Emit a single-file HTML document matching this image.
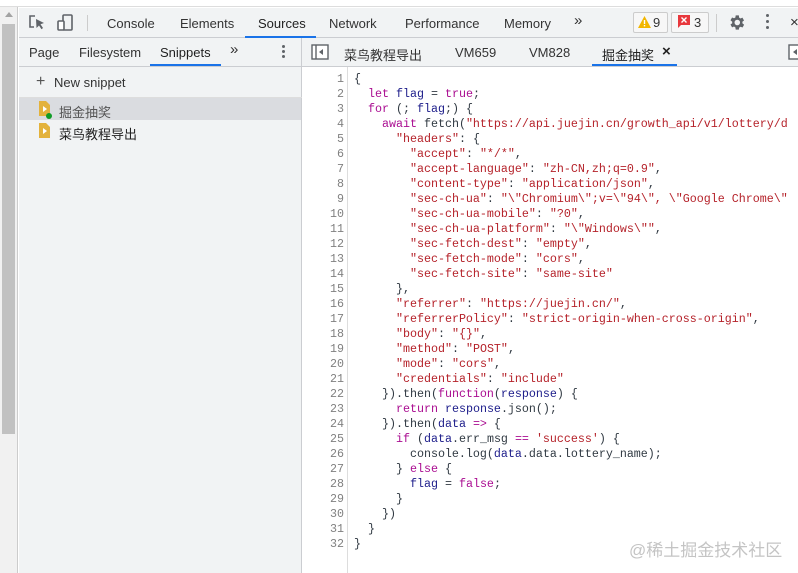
<!DOCTYPE html>
<html><head><meta charset="utf-8"><style>
*{margin:0;padding:0;box-sizing:border-box}
body{width:798px;height:573px;overflow:hidden;background:#fff;position:relative;font-family:"Liberation Sans","Noto Sans CJK SC",sans-serif;font-size:13px;color:#303942}
.a{position:absolute;white-space:nowrap}
.code{position:absolute;left:354px;top:72px;font-family:"Liberation Mono",monospace;font-size:11.67px;line-height:15px;color:#303942;white-space:pre}
.ln{position:absolute;left:302px;width:42px;top:72px;text-align:right;font-family:"Liberation Mono",monospace;font-size:11.67px;line-height:15px;color:#808080;white-space:pre}
.k{color:#aa0d91}.s{color:#b5222a}.v{color:#1c1c8a}
.tab{color:#333}
</style></head><body>
<!-- top white strip -->
<div class="a" style="left:0;top:0;width:798px;height:7px;background:#fff;border-bottom:1px solid #ddd"></div>
<!-- left scrollbar -->
<div class="a" style="left:0;top:7px;width:18px;height:566px;background:#f1f1f1;border-right:1px solid #ccc"></div>
<div class="a" style="left:5px;top:12px;width:0;height:0;border-left:4px solid transparent;border-right:4px solid transparent;border-bottom:5px solid #a3a3a3"></div>
<div class="a" style="left:2px;top:24px;width:13px;height:410px;background:#c1c1c1"></div>
<!-- toolbar -->
<div class="a" style="left:19px;top:8px;width:779px;height:30px;background:#f1f3f4;border-bottom:1px solid #cbcdd1"></div>
<svg class="a" style="left:28px;top:14px" width="18" height="18" viewBox="0 0 18 18"><path d="M7 2H2v11h4" fill="none" stroke="#5f6368" stroke-width="1.6"/><path d="M8 5l8 4-3.5 1.2L15 14l-1.5 1.2-2.5-3.7L8.5 14z" fill="#5f6368"/></svg>
<svg class="a" style="left:56px;top:13px" width="20" height="20" viewBox="0 0 20 20"><rect x="7" y="2" width="9" height="15" rx="1" fill="none" stroke="#5f6368" stroke-width="1.6"/><rect x="2" y="8" width="6" height="9" rx="1" fill="#fff" stroke="#5f6368" stroke-width="1.6"/></svg>
<div class="a" style="left:87px;top:15px;width:1px;height:16px;background:#ccc"></div>
<div class="a tab" style="left:107px;top:16px">Console</div>
<div class="a tab" style="left:180px;top:16px">Elements</div>
<div class="a" style="left:258px;top:16px;color:#1f1f1f">Sources</div>
<div class="a" style="left:245px;top:36px;width:71px;height:2px;background:#1a73e8"></div>
<div class="a tab" style="left:329px;top:16px">Network</div>
<div class="a tab" style="left:405px;top:16px">Performance</div>
<div class="a tab" style="left:504px;top:16px">Memory</div>
<div class="a tab" style="left:574px;top:12px;font-size:15px">»</div>
<div class="a" style="left:633px;top:12px;width:35px;height:21px;border:1px solid #ccc;border-radius:2px;background:#f7f7f7"></div>
<svg class="a" style="left:638px;top:16px" width="13" height="12" viewBox="0 0 13 12"><path d="M6.5 0L13 12H0z" fill="#f2b600"/><rect x="5.8" y="4" width="1.4" height="4" fill="#fff"/><rect x="5.8" y="9" width="1.4" height="1.4" fill="#fff"/></svg>
<div class="a tab" style="left:653px;top:15px">9</div>
<div class="a" style="left:671px;top:12px;width:38px;height:21px;border:1px solid #ccc;border-radius:2px;background:#f7f7f7"></div>
<svg class="a" style="left:678px;top:15px" width="12" height="14" viewBox="0 0 12 14"><path d="M0 0h12v10H3L0 13z" fill="#e8383d"/><path d="M3.5 2.5l5 5M8.5 2.5l-5 5" stroke="#fff" stroke-width="1.4"/></svg>
<div class="a tab" style="left:694px;top:15px">3</div>
<div class="a" style="left:716px;top:14px;width:1px;height:18px;background:#ccc"></div>
<svg class="a" style="left:727px;top:13px" width="19" height="19" viewBox="0 0 24 24"><path fill="#5f6368" d="M19.4 13a7.5 7.5 0 000-2l2.1-1.6-2-3.5-2.5 1a7 7 0 00-1.7-1L15 3h-4l-.4 2.7a7 7 0 00-1.7 1l-2.5-1-2 3.5L6.6 11a7.5 7.5 0 000 2l-2.2 1.6 2 3.5 2.5-1a7 7 0 001.7 1L11 21h4l.4-2.7a7 7 0 001.7-1l2.5 1 2-3.5zM13 15.5a3.5 3.5 0 110-7 3.5 3.5 0 010 7z"/></svg>
<div class="a" style="left:766px;top:14px;width:3px;height:3px;background:#5f6368;border-radius:50%;box-shadow:0 6px 0 #5f6368,0 12px 0 #5f6368"></div>
<div class="a tab" style="left:790px;top:14px;font-size:15px">×</div>
<!-- sidebar -->
<div class="a" style="left:19px;top:38px;width:283px;height:535px;background:#f1f3f4;border-right:1px solid #cbcdd1"></div>
<div class="a" style="left:19px;top:38px;width:283px;height:29px;border-bottom:1px solid #cbcdd1"></div>
<div class="a tab" style="left:29px;top:45px">Page</div>
<div class="a tab" style="left:79px;top:45px">Filesystem</div>
<div class="a" style="left:160px;top:45px;color:#1f1f1f">Snippets</div>
<div class="a" style="left:150px;top:64px;width:71px;height:2px;background:#1a73e8"></div>
<div class="a tab" style="left:230px;top:41px;font-size:15px">»</div>
<div class="a" style="left:282px;top:45px;width:3px;height:3px;background:#5f6368;border-radius:50%;box-shadow:0 5px 0 #5f6368,0 10px 0 #5f6368"></div>
<div class="a" style="left:36px;top:73px;font-size:16px;color:#555">+</div>
<div class="a tab" style="left:54px;top:75px">New snippet</div>
<div class="a" style="left:19px;top:97px;width:283px;height:1px;background:#ddd"></div>
<div class="a" style="left:19px;top:98px;width:282px;height:22px;background:#dadce0"></div>
<svg class="a" style="left:39px;top:101px" width="14" height="18" viewBox="0 0 14 18"><path d="M0 0h7l4 4v11H0z" fill="#e3b23c"/><path d="M4 5l4 3-4 3z" fill="#fff"/><circle cx="10" cy="15" r="3" fill="#109c27"/></svg>
<div class="a" style="left:59px;top:102px;color:#555">掘金抽奖</div>
<svg class="a" style="left:39px;top:123px" width="12" height="16" viewBox="0 0 12 16"><path d="M0 0h7l4 4v11H0z" fill="#e3b23c"/><path d="M4 5l4 3-4 3z" fill="#fff"/></svg>
<div class="a" style="left:59px;top:124px;color:#222">菜鸟教程导出</div>
<!-- editor tabs -->
<div class="a" style="left:302px;top:38px;width:496px;height:29px;background:#f1f3f4;border-bottom:1px solid #cbcdd1"></div>
<svg class="a" style="left:311px;top:44px" width="18" height="16" viewBox="0 0 18 16"><rect x="1" y="1" width="16" height="14" fill="#fff" stroke="#5f6368" stroke-width="1.4"/><path d="M5 1v14" stroke="#5f6368" stroke-width="1.4"/><path d="M12 5v6l-4-3z" fill="#5f6368"/></svg>
<div class="a tab" style="left:344px;top:45px">菜鸟教程导出</div>
<div class="a tab" style="left:455px;top:45px">VM659</div>
<div class="a tab" style="left:529px;top:45px">VM828</div>
<div class="a" style="left:602px;top:45px;color:#222">掘金抽奖</div>
<div class="a" style="left:662px;top:43px;font-size:15px;color:#222;font-weight:bold">×</div>
<div class="a" style="left:592px;top:64px;width:85px;height:2px;background:#1a73e8"></div>
<svg class="a" style="left:788px;top:44px" width="14" height="16" viewBox="0 0 14 16"><rect x="1" y="1" width="14" height="14" fill="#fff" stroke="#5f6368" stroke-width="1.4"/><path d="M9 5v6l-4-3z" fill="#5f6368"/></svg>
<!-- gutter -->
<div class="a" style="left:347px;top:67px;width:1px;height:506px;background:#ddd"></div>
<div class="ln">1
2
3
4
5
6
7
8
9
10
11
12
13
14
15
16
17
18
19
20
21
22
23
24
25
26
27
28
29
30
31
32</div>
<div class="code">{
  <span class="k">let</span> <span class="v">flag</span> = <span class="k">true</span>;
  <span class="k">for</span> (; <span class="v">flag</span>;) {
    <span class="k">await</span> fetch(<span class="s">"https://api.juejin.cn/growth_api/v1/lottery/d</span>
      <span class="s">"headers"</span>: {
        <span class="s">"accept"</span>: <span class="s">"*/*"</span>,
        <span class="s">"accept-language"</span>: <span class="s">"zh-CN,zh;q=0.9"</span>,
        <span class="s">"content-type"</span>: <span class="s">"application/json"</span>,
        <span class="s">"sec-ch-ua"</span>: <span class="s">"\"Chromium\";v=\"94\", \"Google Chrome\"</span>
        <span class="s">"sec-ch-ua-mobile"</span>: <span class="s">"?0"</span>,
        <span class="s">"sec-ch-ua-platform"</span>: <span class="s">"\"Windows\""</span>,
        <span class="s">"sec-fetch-dest"</span>: <span class="s">"empty"</span>,
        <span class="s">"sec-fetch-mode"</span>: <span class="s">"cors"</span>,
        <span class="s">"sec-fetch-site"</span>: <span class="s">"same-site"</span>
      },
      <span class="s">"referrer"</span>: <span class="s">"https://juejin.cn/"</span>,
      <span class="s">"referrerPolicy"</span>: <span class="s">"strict-origin-when-cross-origin"</span>,
      <span class="s">"body"</span>: <span class="s">"{}"</span>,
      <span class="s">"method"</span>: <span class="s">"POST"</span>,
      <span class="s">"mode"</span>: <span class="s">"cors"</span>,
      <span class="s">"credentials"</span>: <span class="s">"include"</span>
    }).then(<span class="k">function</span>(<span class="v">response</span>) {
      <span class="k">return</span> <span class="v">response</span>.json();
    }).then(<span class="v">data</span> <span class="k">=&gt;</span> {
      <span class="k">if</span> (<span class="v">data</span>.err_msg <span class="k">==</span> <span class="s">'success'</span>) {
        console.log(<span class="v">data</span>.data.lottery_name);
      } <span class="k">else</span> {
        <span class="v">flag</span> = <span class="k">false</span>;
      }
    })
  }
}</div>
<div class="a" style="left:629px;top:536px;font-size:17px;color:#c4c4c4">@稀土掘金技术社区</div>
</body></html>
